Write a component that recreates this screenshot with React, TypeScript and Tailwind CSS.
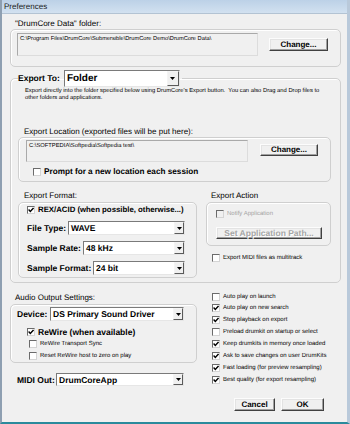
import clsx from "clsx";

type CheckProps = { checked?: boolean; disabled?: boolean };

function Check({ checked = false, disabled = false }: CheckProps) {
	return (
		<span
			className={clsx(
				"flex h-[8px] w-[8px] shrink-0 items-center justify-center border border-t-[#6b6b6b] border-l-[#6b6b6b] border-r-[#d4d4d4] border-b-[#d4d4d4]",
				disabled ? "bg-[#f0f0f0]" : "bg-white",
			)}
		>
			{checked && (
				<svg width="6" height="6" viewBox="0 0 6 6">
					<path d="M0.6 2.6 L2.3 4.4 L5.5 0.9" fill="none" stroke="#000" strokeWidth="1.4" />
				</svg>
			)}
		</span>
	);
}

function CheckRow({ label, checked, disabled, className }: CheckProps & { label: string; className?: string }) {
	return (
		<div className={clsx("flex items-center", className)}>
			<Check checked={checked} disabled={disabled} />
			<span className={clsx("ml-[3px] whitespace-nowrap text-[6px] leading-[8px]", disabled ? "text-[#a3a3a3]" : "text-black")}>{label}</span>
		</div>
	);
}

function Btn({ children, className, disabled }: { children: React.ReactNode; className?: string; disabled?: boolean }) {
	return (
		<div
			className={clsx(
				"flex shrink-0 items-center justify-center whitespace-nowrap border border-t-[#fcfcfc] border-l-[#fcfcfc] border-r-[#404040] border-b-[#404040] bg-[#f0f0f0] font-bold shadow-[inset_-1px_-1px_0_#a0a0a0,inset_1px_1px_0_#e3e3e3]",
				disabled ? "text-[#a6a6a6] [text-shadow:1px_1px_0_#fff]" : "text-black",
				className,
			)}
		>
			{children}
		</div>
	);
}

function Combo({ value, className, big }: { value: string; className?: string; big?: boolean }) {
	return (
		<div className={clsx("flex shrink-0 border border-t-[#7a7a7a] border-l-[#7a7a7a] border-r-[#e6e6e6] border-b-[#e6e6e6] bg-white", className)}>
			<span className={clsx("flex-1 truncate pl-[2px] font-bold", big ? "text-[10px] leading-[15px]" : "text-[8.5px] leading-[12px]")}>{value}</span>
			<span
				className={clsx(
					"flex items-center justify-center border border-t-[#f4f4f4] border-l-[#f4f4f4] border-r-[#5a5a5a] border-b-[#5a5a5a] bg-[#f0f0f0]",
					big ? "w-[12px]" : "w-[10px]",
				)}
			>
				<svg width="5" height="3" viewBox="0 0 5 3">
					<path d="M0 0 H5 L2.5 3 Z" fill="#000" />
				</svg>
			</span>
		</div>
	);
}

const group = "rounded-[5px] border border-[#cfcfcf] shadow-[inset_1px_1px_0_#fff]";
const bold = "whitespace-nowrap font-bold text-[8.5px] leading-[12px]";

export default function App() {
	return (
		<div className="flex h-[424px] w-[350px] flex-col overflow-hidden border-b-[2px] border-l-[2px] border-r-[3px] border-b-[#2a8a9c] border-l-[#8e9fb1] border-r-[#b9c9da] bg-[#f0f0f0] font-['Liberation_Sans',Arial,sans-serif] text-black [text-rendering:geometricPrecision]">
			<div className="h-[14px] shrink-0 border-b border-[#b3c3d3] bg-gradient-to-b from-[#bcd1e7] to-[#d2e1f0] pl-[2px] text-[8px] leading-[13px] text-[#1a1a1a]">
				Preferences
			</div>
			<div className="flex flex-1 flex-col pl-[8px] pr-[6px]">
				<div className="mt-[5px] pl-[5px] text-[8px] leading-[10px]">"DrumCore Data" folder:</div>
				<div className={clsx(group, "flex h-[38px] items-start pt-[3px] pl-[6px]")}>
					<div className="h-[23px] w-[241px] whitespace-nowrap border border-[#a9a9a9] border-r-[#dcdcdc] border-b-[#dcdcdc] pl-[2px] pt-[1px] text-[5.7px] leading-[8px]">
						C:\Program Files\DrumCore\Submersible\DrumCore Demo\DrumCore Data\
					</div>
					<Btn className="mt-[5px] ml-[11px] h-[13px] w-[59px] text-[8px]">Change...</Btn>
				</div>

				<fieldset className={clsx(group, "mt-[3px] min-w-0 pb-[4px]")}>
					<legend className="ml-[7px] flex items-center pr-[2px]">
						<span className="text-[8.5px] font-bold leading-[17px]">Export To:</span>
						<Combo value="Folder" big className="ml-[4px] h-[17px] w-[116px]" />
					</legend>
					<div className="mt-[1px] whitespace-nowrap pl-[14px] text-[5.8px] leading-[7px]">
						Export directly into the folder specified below using DrumCore's Export button.&nbsp; You can also Drag and Drop files to
						<br />
						other folders and applications.
					</div>
					<div className="mt-[25px] pl-[13px] text-[8px] leading-[10px]">Export Location (exported files will be put here):</div>
					<div className={clsx(group, "ml-[7px] mr-[9px] h-[45px]")}>
						<div className="flex items-start pt-[2px] pl-[7px]">
							<div className="h-[22px] w-[222px] whitespace-nowrap border border-[#a9a9a9] border-r-[#dcdcdc] border-b-[#dcdcdc] pl-[2px] pt-[1px] text-[5.8px] leading-[8px]">
								C:\SOFTPEDIA\Softpedia\Softpedia test\
							</div>
							<Btn className="mt-[4px] ml-[12px] h-[12px] w-[58px] text-[8px]">Change...</Btn>
						</div>
						<div className="mt-[4px] flex h-[12px] items-center pl-[14px]">
							<Check />
							<span className="ml-[3px] whitespace-nowrap text-[8.2px] font-bold leading-[10px]">Prompt for a new location each session</span>
						</div>
					</div>

					<div className="ml-[7px] mr-[9px] flex">
						<div className="w-[179px]">
							<div className="h-[20px] pt-[9px] pl-[6px] text-[8px] leading-[10px]">Export Format:</div>
							<div className={clsx(group, "h-[76px] pl-[8px] pr-[11px]")}>
								<div className="mt-[1px] flex h-[12px] items-center">
									<Check checked />
									<span className="ml-[3px] whitespace-nowrap text-[7.8px] font-bold leading-[12px]">REX/ACID (when possible, otherwise...)</span>
								</div>
								<div className="mt-[5px] flex h-[14px] items-center justify-between">
									<span className={bold}>File Type:</span>
									<Combo value="WAVE" className="h-[14px] w-[117px]" />
								</div>
								<div className="mt-[6px] flex h-[14px] items-center justify-between">
									<span className={bold}>Sample Rate:</span>
									<Combo value="48 kHz" className="h-[14px] w-[102px]" />
								</div>
								<div className="mt-[6px] flex h-[14px] items-center justify-between">
									<span className={bold}>Sample Format:</span>
									<Combo value="24 bit" className="h-[14px] w-[92px]" />
								</div>
							</div>
						</div>
						<div className="ml-[9px] w-[125px]">
							<div className="h-[20px] pt-[9px] pl-[5px] text-[8px] leading-[10px]">Export Action</div>
							<div className={clsx(group, "h-[44px] pl-[9px]")}>
								<CheckRow label="Notify Application" disabled className="mt-[5px] h-[12px]" />
								<Btn disabled className="mt-[7px] h-[12px] w-[106px] text-[8.5px]">Set Application Path...</Btn>
							</div>
							<CheckRow label="Export MIDI files as multitrack" className="mt-[6px] h-[12px] pl-[6px]" />
						</div>
					</div>
				</fieldset>

				<div className="flex">
					<div className="w-[187px]">
						<div className="h-[21px] pt-[10px] pl-[5px] text-[8px] leading-[10px]">Audio Output Settings:</div>
						<div className={clsx(group, "h-[59px] pl-[6px] pr-[12px]")}>
							<div className="mt-[2px] flex h-[14px] items-center justify-between">
								<span className={bold}>Device:</span>
								<Combo value="DS Primary Sound Driver" className="h-[14px] w-[134px]" />
							</div>
							<div className="mt-[5px] flex h-[12px] items-center pl-[10px]">
								<Check checked />
								<span className="ml-[3px] whitespace-nowrap text-[8.5px] font-bold leading-[12px]">ReWire (when available)</span>
							</div>
							<CheckRow label="ReWire Transport Sync" className="h-[12px] pl-[12px]" />
							<CheckRow label="Reset ReWire host to zero on play" className="h-[12px] pl-[12px]" />
						</div>
						<div className="mt-[10px] flex h-[13px] items-center justify-between pl-[7px] pr-[13px]">
							<span className={bold}>MIDI Out:</span>
							<Combo value="DrumCoreApp" className="h-[13px] w-[128px]" />
						</div>
					</div>
					<div className="ml-[15px] flex-1 pt-[8px]">
						<CheckRow label="Auto play on launch" className="h-[11px]" />
						<CheckRow label="Auto play on new search" checked className="h-[12px]" />
						<CheckRow label="Stop playback on export" checked className="h-[12px]" />
						<CheckRow label="Preload drumkit on startup or select" className="h-[12px]" />
						<CheckRow label="Keep drumkits in memory once loaded" checked className="h-[12px]" />
						<CheckRow label="Ask to save changes on user DrumKits" checked className="h-[12px]" />
						<CheckRow label="Fast loading (for preview resampling)" checked className="h-[12px]" />
						<CheckRow label="Best quality (for export resampling)" checked className="h-[12px]" />
						<div className="mt-[12px] flex">
							<Btn className="ml-[22px] h-[13px] w-[41px] text-[8px]">Cancel</Btn>
							<Btn className="ml-[6px] h-[13px] w-[43px] text-[8px]">OK</Btn>
						</div>
					</div>
				</div>
			</div>
		</div>
	);
}
